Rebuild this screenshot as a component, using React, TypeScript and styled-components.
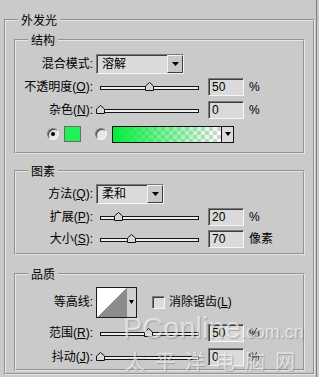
import React from "react";
import styled, { createGlobalStyle } from "styled-components";

const GlobalStyle = createGlobalStyle`
  html, body {
    margin: 0;
    padding: 0;
    background: #cacaca;
  }
  body {
    font-family: "Liberation Sans", "Noto Sans CJK SC", sans-serif;
    font-size: 12px;
    line-height: 16px;
    color: #000;
  }
`;

const Dialog = styled.div`
  position: relative;
  width: 317px;
  height: 377px;
  box-sizing: border-box;
  padding: 12px 0 0 4px;
  border-right: 1px solid #7c7c7c;
  background: #cacaca;
  overflow: hidden;
`;

const Group = styled.fieldset<{ $mt?: number; $pb?: number; $w?: number }>`
  margin: ${(p) => p.$mt ?? 0}px 0 0 0;
  padding: 4px 8px ${(p) => p.$pb ?? 4}px 8px;
  border: 2px groove #e6e6e6;
  min-width: 0;
  box-sizing: border-box;
  width: ${(p) => (p.$w ? `${p.$w}px` : "auto")};
`;

const Legend = styled.legend`
  margin-left: 4px;
  padding: 0 3px;
  line-height: 16px;
  font-family: "Noto Sans CJK SC", sans-serif;
`;

const Row = styled.div<{ $h: number }>`
  display: flex;
  align-items: center;
  height: ${(p) => p.$h}px;
`;

const Label = styled.span`
  flex: none;
  width: 69px;
  margin-right: 3px;
  text-align: right;
  white-space: nowrap;
`;

const Select = styled.div<{ $w: number }>`
  flex: none;
  display: flex;
  width: ${(p) => p.$w}px;
  height: 20px;
  box-sizing: border-box;
  border: 1px solid;
  border-color: #7a7a7a #f6f6f6 #f6f6f6 #7a7a7a;
  box-shadow: inset 1px 1px 0 #3c3c3c;
  background: #dadada;
`;

const SelectText = styled.span`
  flex: 1;
  padding: 1px 0 0 5px;
  line-height: 17px;
`;

const SelectButton = styled.span`
  flex: none;
  width: 16px;
  box-sizing: border-box;
  display: flex;
  align-items: center;
  justify-content: center;
  border: 1px solid;
  border-color: #f4f4f4 #3c3c3c #3c3c3c #f4f4f4;
  background: #c8c8c8;
`;

const Slider = styled.div`
  flex: none;
  display: flex;
  align-items: center;
  width: 112px;
  padding-left: 4px;
  box-sizing: border-box;
`;

const Track = styled.div`
  position: relative;
  width: 99px;
  height: 4px;
  margin-top: 2px;
  box-sizing: border-box;
  border: 1px solid #161616;
  background: #eeeeee;
`;

const Thumb = styled.svg`
  position: absolute;
  bottom: -2px;
  width: 9px;
  height: 9px;
`;

const NumField = styled.div`
  flex: none;
  width: 36px;
  height: 18px;
  box-sizing: border-box;
  padding: 1px 0 0 3px;
  border: 1px solid;
  border-color: #7a7a7a #f6f6f6 #f6f6f6 #7a7a7a;
  box-shadow: inset 1px 1px 0 #3c3c3c;
  background: #dadada;
  line-height: 15px;
`;

const Unit = styled.span`
  margin-left: 5px;
`;

const Radio = styled.span<{ $on?: boolean; $ml: number }>`
  position: relative;
  flex: none;
  width: 12px;
  height: 12px;
  margin-left: ${(p) => p.$ml}px;
  box-sizing: border-box;
  border-radius: 50%;
  border: 1px solid;
  border-color: #7a7a7a #f6f6f6 #f6f6f6 #7a7a7a;
  box-shadow: inset 1px 1px 0 #3c3c3c;
  background: #e6e6e6;
  &::after {
    content: "";
    display: ${(p) => (p.$on ? "block" : "none")};
    position: absolute;
    left: 3px;
    top: 3px;
    width: 4px;
    height: 4px;
    border-radius: 50%;
    background: #000;
  }
`;

const Swatch = styled.span`
  flex: none;
  width: 17px;
  height: 16px;
  margin-left: 5px;
  box-sizing: border-box;
  border: 1px solid #6c6c6c;
  background: #1ef257;
`;

const Gradient = styled.div`
  flex: none;
  display: flex;
  width: 122px;
  height: 17px;
  margin-left: 5px;
  box-sizing: border-box;
  border: 1px solid #111;
`;

const GradientFill = styled.div`
  flex: 1;
  background:
    linear-gradient(to right, #00ee3a 0%, rgba(0, 238, 58, 0.55) 45%, rgba(0, 238, 58, 0) 100%),
    repeating-conic-gradient(#ffffff 0% 25%, #d4d4d4 0% 50%) 0 0 / 8px 8px;
`;

const GradientButton = styled.span`
  flex: none;
  width: 11px;
  display: flex;
  align-items: center;
  justify-content: center;
  border-left: 1px solid #111;
  background: #dcdcdc;
`;

const Contour = styled.div`
  flex: none;
  display: flex;
  width: 41px;
  height: 31px;
  box-sizing: border-box;
  border: 1px solid #1c1c1c;
`;

const ContourCurve = styled.div`
  flex: 1;
  background: linear-gradient(to top left, #8c8c8c 50%, #ffffff 50%);
`;

const ContourButton = styled.span`
  flex: none;
  width: 9px;
  display: flex;
  align-items: center;
  justify-content: center;
  background: #d0d0d0;
`;

const Checkbox = styled.span`
  flex: none;
  width: 13px;
  height: 13px;
  margin-left: 15px;
  box-sizing: border-box;
  border: 1px solid;
  border-color: #7a7a7a #f6f6f6 #f6f6f6 #7a7a7a;
  box-shadow: inset 1px 1px 0 #3c3c3c;
  background: #dcdcdc;
`;

const CheckText = styled.span`
  margin-left: 4px;
  white-space: nowrap;
`;

const Watermark = styled.div`
  position: absolute;
  left: 123px;
  top: 311px;
  pointer-events: none;
  color: rgba(255, 255, 255, 0.6);
  text-shadow: 1px 1px 1px rgba(80, 80, 80, 0.35);
  white-space: nowrap;
`;

const WatermarkLatin = styled.div`
  font-family: "Liberation Sans", sans-serif;
  font-size: 29px;
  line-height: 34px;
`;

const WatermarkSmall = styled.span`
  font-size: 18px;
`;

const WatermarkCn = styled.div`
  margin-left: 2px;
  font-family: "Noto Sans CJK SC", sans-serif;
  font-size: 20px;
  line-height: 24px;
  letter-spacing: 10px;
`;

const Arrow = ({ w = 7 }: { w?: number }) => (
  <svg width={w} height={4} viewBox={`0 0 ${w} 4`}>
    <polygon points={`0,0 ${w},0 ${w / 2},4`} fill="#000" />
  </svg>
);

const SliderControl = ({ pct }: { pct: number }) => (
  <Slider>
    <Track>
      <Thumb viewBox="0 0 9 9" style={{ left: pct * 99 - 5.5 }}>
        <polygon
          points="0.5,8.5 0.5,4 4.5,0.5 8.5,4 8.5,8.5"
          fill="#d6d6d6"
          stroke="#111"
          strokeWidth="1"
        />
      </Thumb>
    </Track>
  </Slider>
);

const SliderRow = ({
  h,
  label,
  pct,
  value,
  unit,
}: {
  h: number;
  label: React.ReactNode;
  pct: number;
  value: string;
  unit: string;
}) => (
  <Row $h={h}>
    <Label>{label}</Label>
    <SliderControl pct={pct} />
    <NumField>{value}</NumField>
    <Unit>{unit}</Unit>
  </Row>
);

export default function App() {
  return (
    <>
      <GlobalStyle />
      <Dialog>
        <Group $w={311} $pb={2}>
          <Legend>外发光</Legend>

          <Group>
            <Legend>结构</Legend>
            <Row $h={23}>
              <Label>混合模式:</Label>
              <Select $w={88}>
                <SelectText>溶解</SelectText>
                <SelectButton>
                  <Arrow />
                </SelectButton>
              </Select>
            </Row>
            <SliderRow
              h={24}
              label={<>不透明度(<u>O</u>):</>}
              pct={0.5}
              value="50"
              unit="%"
            />
            <SliderRow
              h={21}
              label={<>杂色(<u>N</u>):</>}
              pct={0}
              value="0"
              unit="%"
            />
            <Row $h={28}>
              <Radio $on $ml={23} />
              <Swatch />
              <Radio $ml={14} />
              <Gradient>
                <GradientFill />
                <GradientButton>
                  <Arrow w={6} />
                </GradientButton>
              </Gradient>
            </Row>
          </Group>

          <Group $mt={9} $pb={3}>
            <Legend>图素</Legend>
            <Row $h={22}>
              <Label>
                方法(<u>Q</u>):
              </Label>
              <Select $w={68}>
                <SelectText>柔和</SelectText>
                <SelectButton>
                  <Arrow />
                </SelectButton>
              </Select>
            </Row>
            <SliderRow
              h={23}
              label={<>扩展(<u>P</u>):</>}
              pct={0.19}
              value="20"
              unit="%"
            />
            <SliderRow
              h={22}
              label={<>大小(<u>S</u>):</>}
              pct={0.32}
              value="70"
              unit="像素"
            />
          </Group>

          <Group $mt={11} $pb={3}>
            <Legend>品质</Legend>
            <Row $h={32}>
              <Label>等高线:</Label>
              <Contour>
                <ContourCurve />
                <ContourButton>
                  <Arrow w={5} />
                </ContourButton>
              </Contour>
              <Checkbox />
              <CheckText>
                消除锯齿(<u>L</u>)
              </CheckText>
            </Row>
            <SliderRow
              h={29}
              label={<>范围(<u>R</u>):</>}
              pct={0.49}
              value="50"
              unit="%"
            />
            <SliderRow
              h={19}
              label={<>抖动(<u>J</u>):</>}
              pct={0}
              value="0"
              unit="%"
            />
          </Group>
        </Group>

        <Watermark>
          <WatermarkLatin>
            PConline<WatermarkSmall>.com.cn</WatermarkSmall>
          </WatermarkLatin>
          <WatermarkCn>太平洋电脑网</WatermarkCn>
        </Watermark>
      </Dialog>
    </>
  );
}
